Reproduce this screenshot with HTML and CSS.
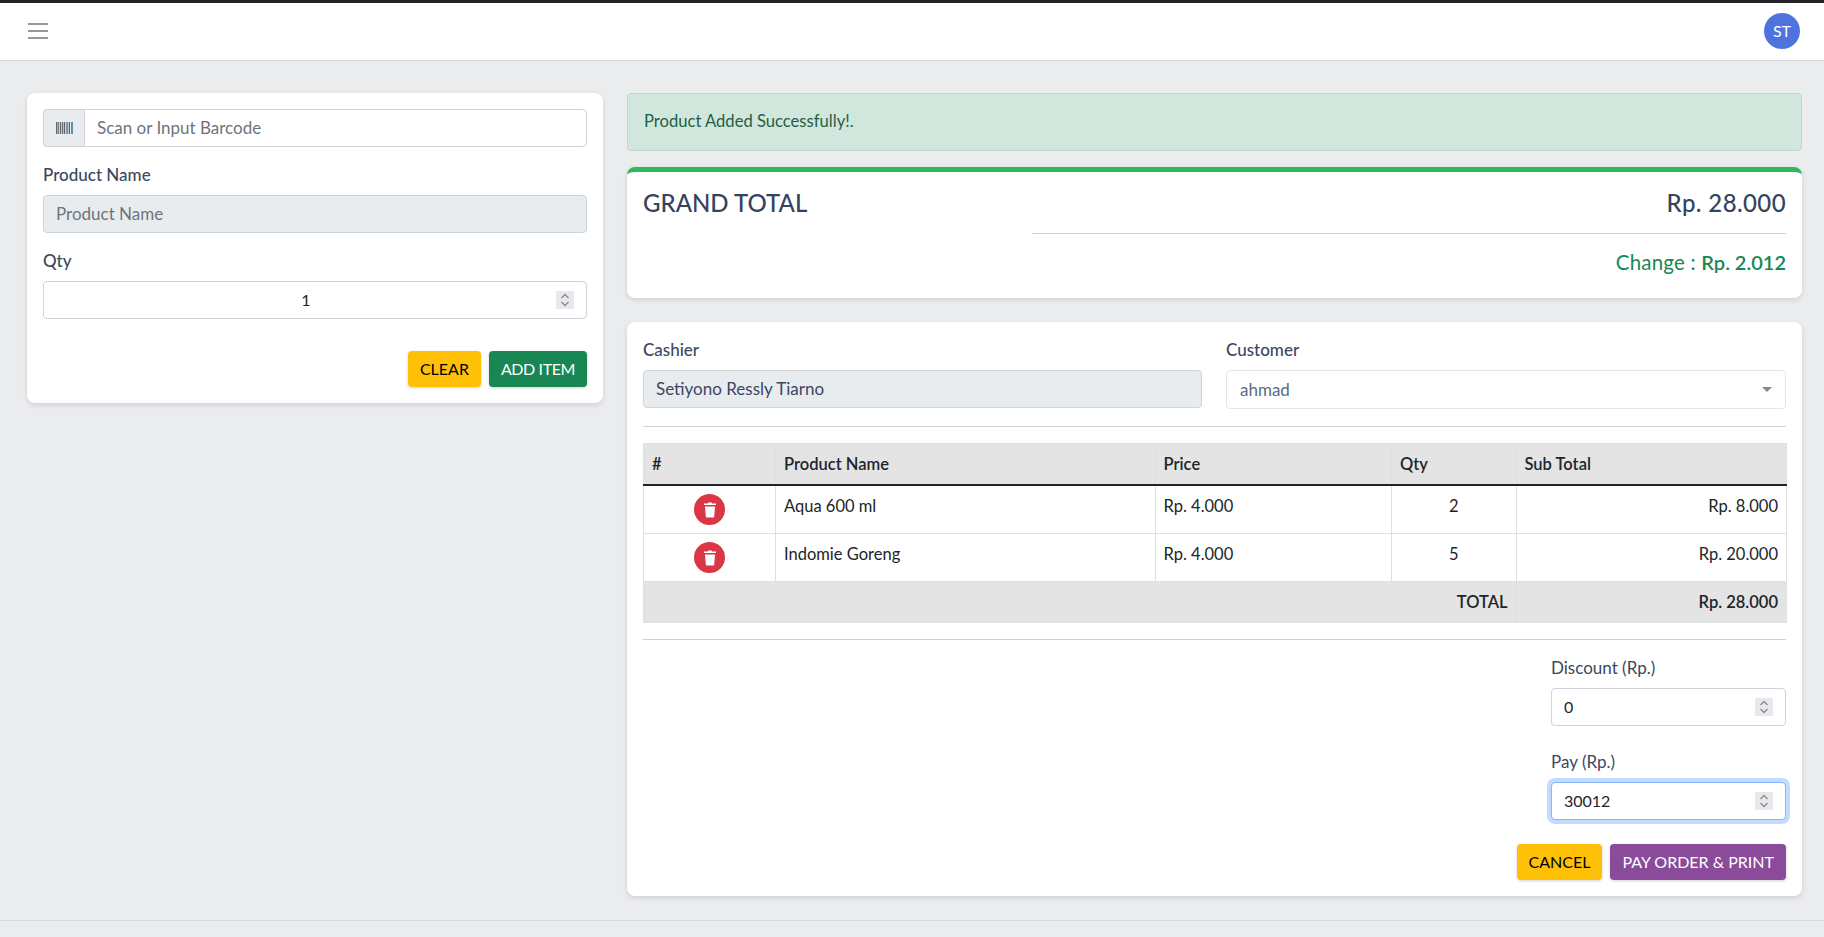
FILE: index.html
```html
<!DOCTYPE html>
<html lang="en">
<head>
<meta charset="utf-8">
<title>POS</title>
<link rel="stylesheet" href="styles.css">
</head>
<body>
<header class="topbar">
  <svg class="burger" viewBox="0 0 20 16" width="20" height="16"><path d="M0 1h20M0 8h20M0 15h20" stroke="#73757d" stroke-width="1.6" fill="none"/></svg>
  <div class="avatar">ST</div>
</header>
<main class="page">
  <section class="card left-card">
    <div class="field input-group">
      <span class="addon">
        <svg viewBox="0 0 17 12" width="17" height="12"><path fill="#5f6671" d="M0 0h1.500v12H0zM2.200 0h1v12h-1zM4 0h1v12H4zM5.800 0h1.500v12H5.800zM8 0h1v12H8zM9.800 0h.8v12h-.8zM11.300 0h1v12h-1zM13 0h1v12h-1z"/><path fill="#5f8fb0" d="M15 0h2v12h-2z"/></svg>
      </span>
      <input class="control group-control" type="text" placeholder="Scan or Input Barcode">
    </div>
    <div class="field">
      <label class="label strong">Product Name</label>
      <input class="control" type="text" placeholder="Product Name" disabled>
    </div>
    <div class="field">
      <label class="label strong">Qty</label>
      <div class="num">
        <input class="control centered" type="number" value="1">
        <span class="spin"><svg viewBox="0 0 18 18" width="18" height="18"><path d="M5.500 7 9 3.500 12.500 7M5.500 11 9 14.500 12.500 11" fill="none" stroke="#8b8c93" stroke-width="1.400"/></svg></span>
      </div>
    </div>
    <div class="actions">
      <button class="btn yellow">CLEAR</button>
      <button class="btn green">ADD ITEM</button>
    </div>
  </section>
  <div class="right-col">
    <div class="alert">Product Added Successfully!.</div>
    <section class="card total-card">
      <h4 class="total-title">GRAND TOTAL</h4>
      <div class="total-values">
        <h4 class="total-amount">Rp. 28.000</h4>
        <hr class="rule total-rule">
        <div class="change">Change : <strong class="change-value">Rp. 2.012</strong></div>
      </div>
    </section>
    <section class="card order-card">
      <div class="two-col">
        <div>
          <label class="label strong">Cashier</label>
          <input class="control" type="text" value="Setiyono Ressly Tiarno" disabled>
        </div>
        <div>
          <label class="label strong">Customer</label>
          <div class="select"><span>ahmad</span><i class="caret"></i></div>
        </div>
      </div>
      <hr class="rule order-rule">
      <table class="items">
        <colgroup>
          <col class="c1"><col class="c2"><col class="c3"><col class="c4"><col class="c5">
        </colgroup>
        <thead>
          <tr><th>#</th><th>Product Name</th><th>Price</th><th>Qty</th><th>Sub Total</th></tr>
        </thead>
        <tbody>
          <tr>
            <td class="center"><button class="del" aria-label="Delete"><svg viewBox="0 0 12 16" width="12" height="16"><path fill="#fff" d="M4.300 .500h3.400l.5 1H12v1.500H0V1.500h3.800zM1 4.500h10l-.8 10.200a1 1 0 0 1-1 .8H2.800a1 1 0 0 1-1-.8z"/></svg></button></td>
            <td>Aqua 600 ml</td><td>Rp. 4.000</td><td class="center">2</td><td class="end">Rp. 8.000</td>
          </tr>
          <tr>
            <td class="center"><button class="del" aria-label="Delete"><svg viewBox="0 0 12 16" width="12" height="16"><path fill="#fff" d="M4.300 .500h3.400l.5 1H12v1.500H0V1.500h3.800zM1 4.500h10l-.8 10.200a1 1 0 0 1-1 .8H2.800a1 1 0 0 1-1-.8z"/></svg></button></td>
            <td>Indomie Goreng</td><td>Rp. 4.000</td><td class="center">5</td><td class="end">Rp. 20.000</td>
          </tr>
        </tbody>
        <tfoot>
          <tr><th class="end" colspan="4">TOTAL</th><th class="end">Rp. 28.000</th></tr>
        </tfoot>
      </table>
      <hr class="rule order-rule-2">
      <div class="pay-form">
        <div class="field">
          <label class="label">Discount (Rp.)</label>
          <div class="num">
            <input class="control" type="number" value="0">
            <span class="spin"><svg viewBox="0 0 18 18" width="18" height="18"><path d="M5.500 7 9 3.500 12.500 7M5.500 11 9 14.500 12.500 11" fill="none" stroke="#8b8c93" stroke-width="1.400"/></svg></span>
          </div>
        </div>
        <div class="field">
          <label class="label">Pay (Rp.)</label>
          <div class="num">
            <input class="control focused" type="number" value="30012">
            <span class="spin"><svg viewBox="0 0 18 18" width="18" height="18"><path d="M5.500 7 9 3.500 12.500 7M5.500 11 9 14.500 12.500 11" fill="none" stroke="#8b8c93" stroke-width="1.400"/></svg></span>
          </div>
        </div>
      </div>
      <div class="actions order-actions">
        <button class="btn yellow">CANCEL</button>
        <button class="btn purple">PAY ORDER &amp; PRINT</button>
      </div>
    </section>
  </div>
</main>
<footer class="footer"></footer>
</body>
</html>
```
FILE: styles.css
```css
* { box-sizing: border-box; }
html, body { height: 100%; }
body {
  margin: 0;
  display: flex;
  flex-direction: column;
  overflow: hidden;
  background: #ebecee;
  border-top: 3px solid #212529;
  color: #3a4861;
  font-family: "Lato", "Liberation Sans", sans-serif;
  font-size: 17px;
  line-height: 24px;
}
.topbar {
  flex: none;
  height: 58px;
  display: flex;
  align-items: center;
  justify-content: space-between;
  padding: 0 24px 1px 28px;
  background: #fff;
  border-bottom: 1px solid #d8dadd;
}
.burger { display: block; }
.avatar {
  width: 36px;
  height: 36px;
  border-radius: 50%;
  background: #4e73df;
  color: #fff;
  font-size: 16px;
  text-align: center;
  line-height: 36px;
}
.page {
  flex: 1;
  display: grid;
  grid-template-columns: 576px 1175px;
  gap: 24px;
  align-items: start;
  padding: 32px 22px 0 27px;
}
.card {
  background: #fff;
  border-radius: 8px;
  padding: 16px;
  box-shadow: 0 2px 5px rgba(40, 50, 70, .14);
}
.field { margin-bottom: 16px; }
.label {
  display: block;
  margin-bottom: 8px;
}
.strong { font-weight: 500; }
.control {
  display: block;
  width: 100%;
  height: 38px;
  padding: 5px 12px 7px;
  border: 1px solid #ced4da;
  border-radius: 4px;
  background: #fff;
  color: #212529;
  font: inherit;
  outline: 0;
  appearance: textfield;
}
.control::placeholder { color: #6c757d; opacity: 1; }
.control:disabled { background: #e9ecef; color: #3a4861; }
.control::-webkit-inner-spin-button { display: none; }
.num .control { font-size: 16px; }
.centered { text-align: center; padding-right: 30px; }
.focused {
  border-color: #86b7fe;
  box-shadow: 0 0 0 4px #c2dbfe;
}
.num { position: relative; }
.spin {
  position: absolute;
  top: 10px;
  right: 13px;
  width: 18px;
  height: 18px;
  background: #e9e9ed;
}
.spin svg { display: block; }
.input-group { display: flex; }
.addon {
  flex: none;
  width: 41px;
  display: flex;
  align-items: center;
  justify-content: center;
  background: #e9ecef;
  border: 1px solid #ced4da;
  border-right: 0;
  border-radius: 4px 0 0 4px;
}
.group-control { flex: 1; border-radius: 0 4px 4px 0; }
.actions {
  display: flex;
  justify-content: flex-end;
  gap: 8px;
  margin-top: 32px;
}
.btn {
  height: 36px;
  padding: 0 12px;
  border: 0;
  border-radius: 4px;
  font: inherit;
  font-size: 16px;
  box-shadow: 0 1px 3px rgba(0, 0, 0, .18);
}
.yellow { background: #ffc107; color: #000; }
.green { background: #198754; color: #fff; letter-spacing: -.4px; }
.purple { background: #8a4b9b; color: #fff; }
.alert {
  height: 58px;
  margin-bottom: 16px;
  padding: 15px 16px;
  background: #d1e7dd;
  border: 1px solid #badbcc;
  border-radius: 4px;
  color: #1f5f42;
  font-size: 16.600px;
}
.total-card {
  height: 131px;
  margin-bottom: 24px;
  display: grid;
  grid-template-columns: 389px 1fr;
  border-top: 5px solid #2fb85c;
}
h4 {
  margin: 0;
  font-size: 24px;
  font-weight: 500;
  line-height: 29px;
  color: #34435e;
}
.total-amount { letter-spacing: .4px; }
.total-values { text-align: right; }
.rule {
  margin: 0;
  border: 0;
  height: 1px;
  background: #cfd1d6;
}
.total-rule { margin: 16px 0 14px; }
.change { font-size: 20.500px; line-height: 28px; color: #198754; letter-spacing: .2px; }
.change-value { font-size: 20px; font-weight: 600; letter-spacing: 0; }
.two-col {
  display: grid;
  grid-template-columns: 559px 559.500px;
  gap: 24px;
}
.select {
  height: 39px;
  display: flex;
  align-items: center;
  justify-content: space-between;
  padding: 0 13px;
  border: 1px solid #e3e5e8;
  border-radius: 4px;
  color: #5a6a80;
}
.caret {
  width: 0;
  height: 0;
  border: 5px solid transparent;
  border-top: 5px solid #888;
  border-bottom: 0;
}
.order-rule { margin: 17px 0 16px; }
.order-rule-2 { margin: 16px 0; }
.items {
  width: 100%;
  table-layout: fixed;
  border-collapse: collapse;
  color: #212529;
  font-size: 16.500px;
}
.c1 { width: 132px; }
.c2 { width: 379.500px; }
.c3 { width: 236.500px; }
.c4 { width: 124.500px; }
.c5 { width: 270.500px; }
.items th, .items td {
  padding: 8px;
  border: 1px solid #dedfe2;
  text-align: left;
  vertical-align: top;
}
.items th { background: #e4e4e4; font-weight: 600; }
.items thead th { border-bottom: 2px solid #212529; }
.items .center { text-align: center; }
.items .end { text-align: right; }
.items tfoot th { height: 41px; }
.del {
  display: inline-flex;
  align-items: center;
  justify-content: center;
  width: 31px;
  height: 31px;
  padding: 0;
  border: 0;
  border-radius: 50%;
  background: #dc3545;
  vertical-align: top;
}
.pay-form { width: 235px; margin-left: auto; }
.pay-form .field:last-child { margin-bottom: 0; }
.pay-form .field + .field { margin-top: 24px; }
.order-actions { margin-top: 24px; }
.footer {
  flex: none;
  height: 17px;
  border-top: 1px solid #d8dadd;
}
```
